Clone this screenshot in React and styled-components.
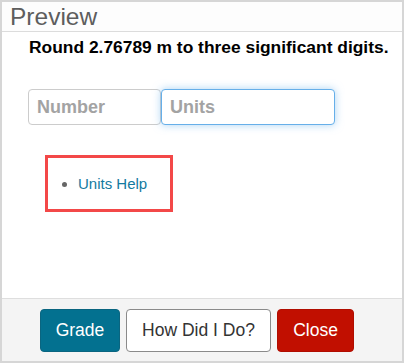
import React from 'react'
import styled, { createGlobalStyle } from 'styled-components'

const Global = createGlobalStyle`
  html, body { margin: 0; padding: 0; background: #fff; }
  body { font-family: "Liberation Sans", Arial, sans-serif; }
`

const Frame = styled.div`
  box-sizing: border-box;
  width: 404px;
  height: 363px;
  border: 2px solid #d6d6d6;
  display: flex;
  flex-direction: column;
  background: #fff;
`

const Header = styled.div`
  height: 29px;
  line-height: 29px;
  padding-left: 8px;
  font-size: 24.5px;
  color: #5e5e5e;
  background: #fdfdfd;
  border-bottom: 1px solid #dcdcdc;
`

const Body = styled.div`
  flex: 1;
  padding: 5px 0 0 26px;
`

const Question = styled.div`
  font-weight: bold;
  font-size: 17.4px;
  color: #000;
  padding-left: 1px;
`

const InputRow = styled.div`
  display: flex;
  margin-top: 31px;
`

const Field = styled.input`
  box-sizing: border-box;
  width: ${p => p.$w}px;
  height: 36px;
  padding: 0 8px;
  font-family: "Liberation Sans", Arial, sans-serif;
  font-size: 18px;
  font-weight: bold;
  border-radius: 4px;
  border: 1px solid ${p => (p.$focus ? '#66afe9' : '#cccccc')};
  box-shadow: ${p => (p.$focus ? '0 0 8px rgba(102,175,233,0.55)' : 'none')};
  outline: none;
  background: #fff;
  &::placeholder { color: #a3a3a3; }
`

const HelpBox = styled.div`
  box-sizing: border-box;
  width: 128px;
  height: 57px;
  margin: 30px 0 0 17px;
  border: 3px solid #f34848;
  display: flex;
  align-items: center;
`

const HelpList = styled.ul`
  margin: 0;
  padding-left: 30px;
  color: #666;
  font-size: 15px;
  li a { color: #137aa0; text-decoration: none; }
`

const Footer = styled.div`
  height: 62px;
  border-top: 1px solid #dedede;
  background: #f4f4f4;
  display: flex;
  align-items: center;
  padding-left: 38px;
  gap: 6px;
`

const Button = styled.button`
  box-sizing: border-box;
  height: 43px;
  width: ${p => p.$w}px;
  border-radius: 4px;
  font-family: "Liberation Sans", Arial, sans-serif;
  font-size: 17.5px;
  border: 1px solid ${p => p.$border};
  background: ${p => p.$bg};
  color: ${p => p.$color};
  padding: 0;
`

export default function App() {
  return (
    <>
      <Global />
      <Frame>
        <Header>Preview</Header>
        <Body>
          <Question>Round 2.76789 m to three significant digits.</Question>
          <InputRow>
            <Field $w={133} placeholder="Number" />
            <Field $w={174} $focus placeholder="Units" autoFocus />
          </InputRow>
          <HelpBox>
            <HelpList>
              <li><a href="#">Units Help</a></li>
            </HelpList>
          </HelpBox>
        </Body>
        <Footer>
          <Button $w={80} $bg="#037190" $border="#0a6580" $color="#fff">Grade</Button>
          <Button $w={145} $bg="#fff" $border="#8a8a8a" $color="#333">How Did I Do?</Button>
          <Button $w={77} $bg="#c10f00" $border="#b00d00" $color="#fff">Close</Button>
        </Footer>
      </Frame>
    </>
  )
}
